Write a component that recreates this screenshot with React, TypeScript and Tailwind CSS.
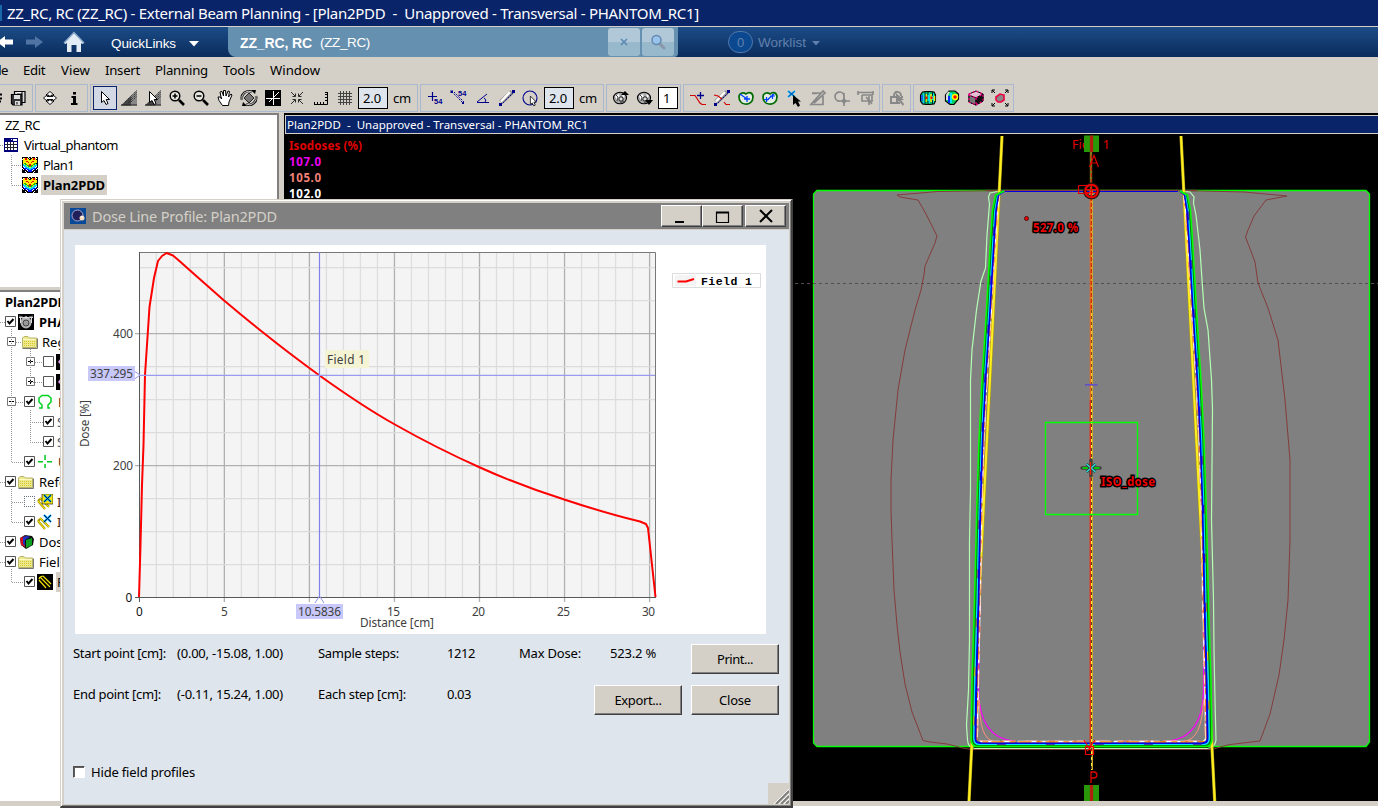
import { useLayoutEffect, useRef, type ReactNode } from "react";

const UI = "font-['Noto_Sans','Open_Sans',sans-serif]";
const ARIAL = "font-['Liberation_Sans',Arial,sans-serif]";

/** Single line of text whose tracking is adjusted so that it spans `w` pixels. */
function Fit({ w, className = "", children }: { w: number; className?: string; children: string }) {
  const ref = useRef<HTMLSpanElement>(null);
  useLayoutEffect(() => {
    const el = ref.current;
    if (!el) return;
    el.style.letterSpacing = "0px";
    const natural = el.getBoundingClientRect().width;
    el.style.letterSpacing = `${(w - natural) / children.length}px`;
  }, [w, children]);
  return (
    <span ref={ref} className={`inline-block shrink-0 whitespace-pre ${className}`}>
      {children}
    </span>
  );
}

/* ---------- toolbar ---------- */

function Icon({ children, active = false }: { children: ReactNode; active?: boolean }) {
  return (
    <span className={`flex h-6 w-6 shrink-0 items-center justify-center ${active ? "border border-[#0a246a] bg-[#d2d8e4]" : ""}`}>
      <svg viewBox="-12 -12 24 24" className="h-6 w-6 shrink-0" fill="none" stroke="#000">
        {children}
      </svg>
    </span>
  );
}

const Pointer = () => (
  <path d="M-3.500 -6.500V4.500L-1 2.500L1 6.500L3 5.500L1.200 1.500H4.500Z" fill="#fff" stroke="#000" />
);

const Dither = () => (
  <>
    <path d="M-8 7.500L8 -8V7.500Z" fill="#888" stroke="none" />
    <path d="M-8 7.500L2 -2V7.500Z" fill="#444" stroke="none" />
    <path d="M2 -2L8 -8M2 0L8 -6M2 2L8 -4M-4 4L2 -2M2 4L8 -2M-1 5L4 0" stroke="#222" strokeDasharray="1 1.200" />
    <path d="M-8 7H8" stroke="#222" />
  </>
);

function Magnifier({ plus }: { plus: boolean }) {
  return (
    <>
      <circle cx="-2" cy="-2" r="4.800" strokeWidth="1.400" fill="#e8e6e0" />
      <path d="M2 2L7 7" strokeWidth="2.600" />
      <path d={plus ? "M-4.500 -2H0.500M-2 -4.500V0.500" : "M-4.500 -2H0.500"} strokeWidth="1.500" />
    </>
  );
}

const Ruler = () => (
  <>
    <path d="M-6 4L5 -6" stroke="#8a8a8a" strokeWidth="5" />
    <path d="M-6 3.500L3 -6" stroke="#fff" strokeWidth="2.500" />
    <path d="M-6 7L7 -6" stroke="#00008b" strokeDasharray="1.500 1" />
    <path d="M-8 5H-5V8H-8ZM5 -8H8V-5H5Z" fill="#00008b" stroke="none" />
  </>
);

const Label54 = ({ x, y }: { x: number; y: number }) => (
  <text x={x} y={y} fontSize="7.500" fontWeight="bold" fill="#00008b" stroke="none" fontFamily="Liberation Sans, sans-serif">54</text>
);

const Hand = () => (
  <path d="M-2.500 7.500L-6 2.500L-7 -1L-4.500 -1L-3.500 1L-5 -6L-3 -6.500L-1.500 -2L-1.500 -7.500L0.500 -7.500L1 -2L3 -7L4.500 -6.500L3.500 -1L6 -4L7 -3L4 4L3.500 7.500Z" fill="#fff" strokeWidth="1" />
);

function Globe({ up }: { up: boolean }) {
  return (
    <>
      <ellipse cx="-1" cy="0" rx="6.500" ry="5.800" fill="#aaa" strokeWidth="1.100" />
      <path d="M-6 -2L-2 -4L-1 0L-4 2ZM1 -4L4 -2L2 0Z" fill="#fff" stroke="none" />
      <path d="M-5 -3L-3 -1L-4 3M-1 5L3 3" stroke="#444" />
      <circle cx="0" cy="1" r="2.200" fill="#ddd" strokeWidth=".9" />
      <path d={up ? "M0 -3L4 -7L8 -3Z" : "M0 2L4 7L8 2Z"} fill="#000" stroke="none" />
    </>
  );
}

function Contour({ two }: { two: boolean }) {
  return (
    <>
      <path d="M0 -4C3 -7 7 -5 7 -1C7 4 3 6.500 -1 6C-5 6 -7 2 -7 -1C-7 -5 -3 -6 0 -4Z" stroke="#006c00" strokeWidth="1.700" fill="#e4ece4" />
      {two ? (
        <path d="M-4 3L4 -4M-6 1.500H-1M-3.500 -1V4M0 -2H5M2.500 -4V1" stroke="#0040ff" strokeWidth="1.200" />
      ) : (
        <path d="M-6 -4L1 1M-2 1H4M1 -2V4" stroke="#0040ff" strokeWidth="1.300" />
      )}
    </>
  );
}

function Group({ children, className }: { children: ReactNode; className: string }) {
  return <div className={`flex h-[28px] shrink-0 items-start border border-[#aab8d0] pl-[2px] pt-px ${className}`}>{children}</div>;
}

function NumberBox({ value, className }: { value: string; className: string }) {
  return (
    <span className={`mt-px flex h-[22px] shrink-0 items-center border border-black pl-1 pt-px text-[13px] leading-none ${className}`}>
      <Fit w={value.length > 1 ? 18 : 7}>{value}</Fit>
    </span>
  );
}

const Cm = () => <Fit w={18} className="ml-[5px] mt-[3px] text-[13px] leading-[19px]">cm</Fit>;

function Toolbar() {
  return (
    <div className="flex h-[29px] items-start gap-[2px] overflow-hidden">
      <div className="flex h-[28px] w-[33px] shrink-0 items-start border-y border-r border-[#aab8d0] pt-px">
        <svg viewBox="0 0 6 24" className="h-6 w-[6px]" stroke="#000" fill="none"><path d="M0 8.500H2M0 12.500H2M0 15.500H1" strokeWidth="2" /></svg>
        <Icon>
          <path d="M-3.500 -4V-6.500H7V4.500H4" fill="#ddd" strokeWidth="1.200" />
          <path d="M-1 -6.500H4V-4H-1" fill="#fff" />
          <path d="M-6.500 -3.500H4V7H-5L-6.500 5.500Z" fill="#333" strokeWidth="1.200" />
          <path d="M-4 -3H2V1H-4ZM-3 3H2V7H-3Z" fill="#ddd" stroke="none" />
          <path d="M-1 4V6.500" />
        </Icon>
      </div>
      <Group className="w-[53px]">
        <Icon>
          <path d="M-1.500 -3V-2H1.500V-3H4L0 -6.500L-4 -3ZM-1.500 3V2H1.500V3H4L0 6.500L-4 3ZM-6.500 0L-3 -3V-1.500H3V-3L6.500 0L3 3V1.500H-3V3Z" fill="#fff" strokeWidth=".9" />
        </Icon>
        <Icon><path d="M-1 -6H2V-3.500H-1ZM-2.500 -2H2V5H3.500V7H-3V5H-1V0H-2.500Z" fill="#000" stroke="none" /></Icon>
      </Group>
      <Group className="w-[328px]">
        <Icon active><Pointer /></Icon>
        <Icon><Dither /></Icon>
        <Icon><Dither /><Pointer /></Icon>
        <Icon><Magnifier plus /></Icon>
        <Icon><Magnifier plus={false} /></Icon>
        <Icon><Hand /></Icon>
        <Icon>
          <path d="M0 -5L5 0L0 5L-5 0Z" fill="#777" strokeWidth=".8" />
          <path d="M-7 2A7 7 0 0 1 3 -6M7 -2A7 7 0 0 1 -3 6" strokeWidth="2.400" />
          <path d="M-7 2A7 7 0 0 1 3 -6M7 -2A7 7 0 0 1 -3 6" stroke="#eee" strokeWidth=".9" />
          <path d="M2 -8L6 -4L7 -8ZM-2 8L-6 4L-7 8Z" fill="#000" stroke="none" />
        </Icon>
        <Icon>
          <path d="M-8 -8H8V8H-8Z" fill="#000" stroke="none" />
          <path d="M-7 .5H7M.5 -7V7M0 0L6 -6M0 0L-4 4" stroke="#fff" />
        </Icon>
        <Icon><path d="M-6 -6L-2 -2M-1.500 -4.500V-1.500H-4.500M6 -6L2 -2M1.500 -4.500V-1.500H4.500M-6 6L-2 2M-1.500 4.500V1.500H-4.500M6 6L2 2M1.500 4.500V1.500H4.500" strokeWidth=".8" /></Icon>
        <Icon><path d="M-7 6.500H6.500V-6M-6.500 6V4M-3.500 6V4M-.5 6V4M2.500 6V4M6 2.500H4M6 -.5H4M6 -3.500H4M6 -5.500H4" /></Icon>
        <Icon><path d="M-4.500 -7V7M-1.500 -7V7M1.500 -7V7M4.500 -7V7M-7 -4.500H7M-7 -1.500H7M-7 1.500H7M-7 4.500H7" stroke="#444" /></Icon>
        <NumberBox value="2.0" className="ml-px w-[30px] bg-[#dee5ec]" />
        <Cm />
      </Group>
      <Group className="w-[184px]">
        <Icon><path d="M-7 -1.500H2M-2.500 -6V3" stroke="#00008b" strokeWidth="1.200" /><Label54 x={-1} y={5.500} /></Icon>
        <Icon><path d="M-7 -6L5 6M-5 -6L5 4" stroke="#00008b" strokeDasharray="1.500 1" /><path d="M-8.500 -7.500H-6V-5H-8.500ZM3 4H5V6H3Z" fill="#00008b" stroke="none" /><Label54 x={-1} y={-2} /></Icon>
        <Icon><path d="M-6 4.500H6M-6 4L4 -4M1 0C3 1 3 3 2 4" stroke="#00008b" /></Icon>
        <Icon><Ruler /></Icon>
        <Icon><circle cx="-1" r="7" stroke="#00008b" strokeWidth="1.100" /><g transform="translate(2 3) scale(.75)"><Pointer /></g></Icon>
        <NumberBox value="2.0" className="ml-px w-[30px] bg-[#dee5ec]" />
        <Cm />
      </Group>
      <Group className="w-[75px]">
        <Icon><Globe up /></Icon>
        <Icon><Globe up={false} /></Icon>
        <NumberBox value="1" className="ml-px w-[20px] bg-white" />
      </Group>
      <Group className="w-[197px]">
        <Icon><path d="M-8 -2.500H-3L0 2L2 5L4 6.500H8" stroke="#d00000" strokeWidth="1.200" /><path d="M-1 -2.500H6M2.500 -6V1" stroke="#00008b" strokeWidth="1.300" /></Icon>
        <Icon><Ruler /><path d="M-8 -3L-4 -2L0 1M2 4L4 6.500H8" stroke="#d00000" strokeWidth="1.200" /></Icon>
        <Icon><Contour two={false} /></Icon>
        <Icon><Contour two /></Icon>
        <Icon>
          <path d="M-6 -7L1 -1M1 -7L-6 -1" stroke="#00b0ff" strokeWidth="1.700" />
          <path d="M-5.500 -6.500L.5 -1.500M.5 -6.500L-5.500 -1.500" stroke="#002080" strokeWidth=".7" />
          <path d="M-1 -3V7L1.500 5L4 9L6 7.500L4 3.500H7Z" fill="#000" stroke="none" />
        </Icon>
        <Icon><path d="M-6 -5H3M-6 -4.500H-1M5 -2V6.500H-7L5 -7L7 -5L-4 5" stroke="#888" strokeWidth="1.700" /></Icon>
        <Icon><path d="M2 -2A4.500 4.500 0 1 0 -2 3M2 -5V8M-3 3H8" stroke="#888" strokeWidth="1.700" /><path d="M2 0L5 3L2 6L-1 3Z" fill="#888" stroke="none" /></Icon>
        <Icon><path d="M-8 -5.500H7M-8 -7V-3M7 -7V-3M-4 -3H6V3M-4 -3V3H0M0 -1L6 6M3 -2V7M0 3H7" stroke="#888" strokeWidth="1.600" /></Icon>
      </Group>
      <Group className="w-[29px]">
        <Icon><path d="M-7 -1H1M-6 -1V5H3M-3 -2C-3 -8 4 -7 4 -2M4 -1H6" stroke="#888" strokeWidth="2" /><path d="M-1 -5V5L2 3L6 8L7 6L4 2H7Z" fill="#888" stroke="none" /></Icon>
      </Group>
      <Group className="w-[101px]">
        <Icon>
          <path d="M-5.500 -6L-2 -6.500L2 -6.500L6 -6L7.500 -3V3L6 6L2 6.500L-2 6.500L-5.500 6L-7.500 3V-3Z" fill="#00c070" strokeWidth="1.100" />
          <path d="M-6 -3V3M-5 4V5" stroke="#2040ff" strokeWidth="1.500" />
          <path d="M-4 -5V5M1 -5V5M5 -5V5" stroke="#00f0ff" strokeWidth="1.500" />
          <path d="M-2 -4V4M3 -4V4M6.500 -2V3" stroke="#ffee00" strokeWidth="1.500" />
          <path d="M-1.500 -1.500V1M3.500 -1.500V1" stroke="#f00" strokeWidth="2" />
          <path d="M-3 -6V6M0 -6.500V-3M0 3V6M4.500 -6V-2M4.500 2V6" strokeWidth=".8" />
        </Icon>
        <Icon>
          <path d="M-3 -7H3L6.500 -4V1L2 6.500H-2L-6.500 3V-3Z" fill="#00d060" strokeWidth="1.200" />
          <path d="M-3 -6L-5 -3V2" stroke="#ddd" strokeWidth="2" /><path d="M-3 -2V5" stroke="#0028ff" strokeWidth="2" /><path d="M-1 -5V5" stroke="#00e5ff" strokeWidth="2" />
          <circle cx="3" cy="-1" r="2.500" fill="#f00" stroke="#ff0" strokeWidth="1.500" />
        </Icon>
        <Icon>
          <path d="M-7 -4L0 -7L7 -4V3L0 7L-7 4Z" fill="#e0c0d0" stroke="#000" />
          <path d="M-7 -3L0 0V7L-7 4Z" fill="#777" /><path d="M0 0L7 -4V3L0 7Z" fill="#111" />
          <path d="M-7 -4L0 -7L7 -4V3L0 7L-7 4ZM-7 -3L0 0L7 -4M0 0V7" stroke="#ff0090" strokeDasharray="2 2" strokeWidth="1.200" />
        </Icon>
        <Icon>
          <path d="M-8 -5V-8H-5M8 -5V-8H5M-8 5V8H-5M8 5V8H5M-8 -8L-5 -5M8 -8L5 -5M-8 8L-5 5M8 8L5 5" strokeWidth="1" />
          <path d="M-4 -1L0 -4L4 -3V2L1 4H-2L-4 2Z" fill="#888" stroke="#f00040" strokeWidth="1.600" />
        </Icon>
      </Group>
    </div>
  );
}

/* ---------- trees ---------- */

function PlanIcon() {
  return (
    <svg viewBox="0 0 16 16" className="h-4 w-4 shrink-0" shapeRendering="crispEdges">
      <path d="M0 0H16V16H0Z" />
      <path d="M2 1H5L8 3L11 1H14L15 4L14 9L8 14L2 9L1 4Z" fill="#ffee00" />
      <path d="M1 7L8 11L15 7V10L8 15L1 10Z" fill="#00d8ff" />
      <path d="M1 9.500L8 13L15 9.500V11L8 15.500L1 11Z" fill="#0018ff" />
      <path d="M2 6L8 10L14 6" stroke="#18b818" fill="none" />
      <path d="M3 1H5V3H3ZM11 1H13V3H11ZM7 7H9V9H7ZM4 4H6V5H4ZM10 4H12V5H10ZM6 5H7V6H6ZM9 5H10V6H9Z" fill="#f00000" />
      <path d="M0 3L3 0M13 0L16 3M0 11L5 16M16 11L11 16M6 0L8 2L10 0M1 9L7 15M15 9L9 15" stroke="#fff" strokeDasharray="1 1" fill="none" />
    </svg>
  );
}

function Check({ state = "on" }: { state?: "on" | "off" | "dotted" }) {
  if (state === "dotted") return <span className="-mt-px h-[11px] w-[11px] shrink-0 border border-dotted border-gray-500 bg-white" />;
  return (
    <svg viewBox="0 0 11 11" className="-mt-px h-[11px] w-[11px] shrink-0">
      <path d="M.5 .5H10.500V10.500H.5Z" fill="#fff" stroke="#555" />
      {state === "on" && <path d="M2.500 5L4.500 7.500L8.500 3" fill="none" stroke="#000" strokeWidth="2" />}
    </svg>
  );
}

const Expander = ({ plus = false }: { plus?: boolean }) => (
  <svg viewBox="0 0 9 9" className="-mt-px h-[9px] w-[9px] shrink-0">
    <path d="M.5 .5H8.500V8.500H.5Z" fill="#fff" stroke="#777" />
    <path d={plus ? "M2 4.500H7M4.500 2V7" : "M2 4.500H7"} stroke="#000" />
  </svg>
);

const Folder = () => (
  <svg viewBox="0 0 16 14" className="h-[14px] w-4 shrink-0">
    <path d="M.5 12.500V3L2 1.500H6L7.500 3H14.500V12.500Z" fill="#ece890" stroke="#b8b468" />
    <path d="M1 4.500H14" stroke="#fffbc0" />
    <path d="M2 6.500H14M2 8.500H14M2 10.500H14" stroke="#d8c828" strokeDasharray="1 1" />
    <path d="M.5 13.500H15.500V3.500" stroke="#777" fill="none" />
  </svg>
);

const FieldLines = ({ dark = false, mark = false, box = false }: { dark?: boolean; mark?: boolean; box?: boolean }) => (
  <svg viewBox="0 0 16 16" className="h-4 w-4 shrink-0" fill="none">
    {dark && <path d="M0 0H16V16H0Z" fill="#000" />}
    {dark ? (
      <path d="M3 3L13 13M6 2L14 10M2 6L9 14M3 3L6 2M2 5L3 3" stroke="#f0e000" strokeWidth="1.200" />
    ) : (
      <>
        <path d="M1 7L8 15M3 4L12 13M1 7L3 5" stroke="#a89800" strokeWidth="2.200" />
        <path d="M1 7L8 15M3 4L12 13" stroke="#ffe800" strokeWidth="1" />
      </>
    )}
    {box && <path d="M5 0H16V10H5Z" fill="#ffe800" stroke="#222" strokeWidth=".7" />}
    {mark && <path d="M7 1L14 8M14 1L7 8" stroke="#00a0e8" strokeWidth="2.200" />}
    {mark && <path d="M7 1L14 8M14 1L7 8" stroke="#001050" strokeWidth=".9" />}
  </svg>
);

function Row({ className = "", children }: { className?: string; children: ReactNode }) {
  return <div className={`flex h-5 shrink-0 items-center whitespace-nowrap text-[13px] leading-5 ${className}`}>{children}</div>;
}

function Trees() {
  return (
    <div className="flex w-[279px] shrink-0 flex-col">
      <div className="relative h-[174px] border-r-2 border-t-2 border-[#808080] bg-white">
        <svg className="absolute left-0 top-0 h-20 w-10" stroke="#999" fill="none" strokeDasharray="1 1">
          <path d="M0 30.500H4M11.500 40V70.500M12 50.500H22M12 70.500H22" />
        </svg>
        <Row className="pl-[5px]"><Fit w={35}>ZZ_RC</Fit></Row>
        <Row className="gap-[6px] pl-1">
          <svg viewBox="0 0 14 14" className="h-[14px] w-[14px] shrink-0" shapeRendering="crispEdges">
            <path d="M0 0H14V14H0Z" fill="#00007c" /><path d="M1 4H13V12H1Z" fill="#fff" />
            <path d="M1 6.500H13M1 9.500H13M3.500 4V12M6.500 4V12M9.500 4V12" stroke="#223" />
            <path d="M7 1H8V2H7ZM9 1H13V3H9Z" fill="#fff" />
          </svg>
          <Fit w={94}>Virtual_phantom</Fit>
        </Row>
        <Row className="gap-[5px] pl-[22px]"><PlanIcon /><Fit w={31}>Plan1</Fit></Row>
        <Row className="gap-[3px] pl-[22px]">
          <PlanIcon />
          <span className="h-5 w-[66px] bg-[#d4d0c8] pl-[2px] font-bold"><Fit w={62}>Plan2PDD</Fit></span>
        </Row>
      </div>
      <div className="h-[3px]" />
      <div className="relative h-[511px] overflow-hidden border-r-2 border-t-2 border-[#808080] bg-white">
        <svg className="absolute left-0 top-0 h-[310px] w-[60px]" stroke="#999" fill="none" strokeDasharray="1 1">
          <path d="M0 30.500H5M0 190.500H5M0 250.500H5M0 270.500H5M11.500 37V170.500H24M16 50.500H22M30.500 57V90.500H43M35 70.500H43M16 110.500H24M30.500 118V150.500H43M30 130.500H43M11.500 197V230.500H24M12 210.500H24M11.500 277V290.500H24" />
        </svg>
        <Row className="pl-[5px] font-bold"><Fit w={62}>Plan2PDD</Fit></Row>
        <Row className="pl-[5px] font-bold">
          <Check />
          <svg viewBox="0 0 16 16" className="ml-[2px] mr-[5px] h-4 w-4">
            <path d="M0 0H16V16H0Z" /><ellipse cx="8" cy="8.500" rx="5.500" ry="6" fill="#b0b0b0" /><circle cx="8" cy="9" r="3" fill="#999" stroke="#444" /><path d="M1 3.500H15M8 2V5M2.500 9V4M13.500 9V4" stroke="#ddd" /><path d="M1 2L5 3M15 2L11 3" stroke="#888" />
          </svg>
          PHANTOM
        </Row>
        <Row className="pl-[7px]"><Expander /><span className="w-[6px]" /><Folder /><span className="w-[4px]" />Registered</Row>
        {[0, 1].map((n) => (
          <Row key={n} className="pl-[26px]">
            <Expander plus /><span className="w-2" /><Check state="off" />
            <svg viewBox="0 0 16 16" className="ml-[2px] h-4 w-4"><path d="M0 0H16V16H0Z" /><path d="M2 8L5 4V11Z" fill="#e0a0f0" /></svg>
          </Row>
        ))}
        <Row className="pl-[7px]">
          <Expander /><span className="w-2" /><Check />
          <svg viewBox="0 0 16 16" className="ml-[2px] mr-[5px] h-4 w-4" fill="none" stroke="#00d020" strokeWidth="1.500"><path d="M2 14H5V11L2 8V4L5 1.500H11L14 4V8L11 11V14H13" /></svg>
          <span className="text-[#502010]">BODY</span>
        </Row>
        <Row className="pl-[43px]"><Check /><span className="ml-[3px] text-gray-600">S</span></Row>
        <Row className="pl-[43px]"><Check /><span className="ml-[3px] text-gray-600">S</span></Row>
        <Row className="pl-[24px]">
          <Check />
          <svg viewBox="0 0 16 16" className="ml-[3px] mr-[4px] h-4 w-4"><path d="M0 7H5V8.500H0ZM9 7H14V8.500H9ZM6.300 1H7.800V6H6.300ZM6.300 10H7.800V14H6.300Z" fill="#00c820" /></svg>
          <span className="text-[#502010]">User</span>
        </Row>
        <Row className="pl-[5px]"><Check /><span className="w-[2px]" /><Folder /><span className="w-[5px]" />Reference</Row>
        <Row className="pl-[24px]"><Check state="dotted" /><span className="w-[2px]" /><FieldLines mark box /><span className="w-[4px]" /><span className="text-[#502010]">ISO</span></Row>
        <Row className="pl-[24px]"><Check /><span className="w-[2px]" /><FieldLines mark /><span className="w-[4px]" /><span className="text-[#502010]">ISO</span></Row>
        <Row className="pl-[5px]">
          <Check />
          <svg viewBox="0 0 16 16" className="ml-[3px] mr-[4px] h-4 w-4"><path d="M1 4L6 1L13 2L15 5L14 11L7 15L2 11Z" fill="#111" /><path d="M1 4L6 2V13L2 11Z" fill="#d01020" /><path d="M4 3L8 2L11 3L6 6V12L4 10Z" fill="#2030c0" /><path d="M7 6L13 4V11L7 14Z" fill="#10a020" /></svg>
          Dose
        </Row>
        <Row className="pl-[5px]"><Check /><span className="w-[2px]" /><Folder /><span className="w-[5px]" />Fields</Row>
        <Row className="pl-[24px]"><Check /><span className="w-[2px]" /><FieldLines dark /><span className="ml-[3px] h-5 w-8 bg-[#d4d0c8] pl-px">Field</span></Row>
      </div>
    </div>
  );
}

/* ---------- transversal view ---------- */

const DEPTH: [number, number][] = [[195, 995.5], [210, 992.5], [240, 990.5], [283, 988], [310, 986.5], [380, 982], [440, 979], [500, 977], [540, 976], [600, 974.5], [680, 972], [738, 971]];

const LAYERS = [
  { color: "#ff8a80", d: 6.8, b: 741, w: 1, dash: "14 9" },
  { color: "#ffffff", d: 6.2, b: 741.5, w: 1.5, dash: "19 3 9 6" },
  { color: "#ff7f00", d: 5.5, b: 742, w: 1.5, dash: "13 5 6 3" },
  { color: "#0000e8", d: 4.3, b: 743.5, w: 2.2, dash: undefined },
  { color: "#00e5ff", d: 2.6, b: 744.7, w: 1.5, dash: "40 9" },
  { color: "#00820a", d: 1.3, b: 745.7, w: 1.5, dash: undefined },
  { color: "#00ff00", d: 0, b: 746.5, w: 1.5, dash: undefined },
];

/** The layers lie closer together near the surface than at depth. */
const spread = (y: number) => (y < 210 ? 0.6 : y < 520 ? 0.78 : Math.min(1, 0.78 + ((y - 520) / 140) * 0.22));

function isodose(d: number, bottom: number) {
  const left = DEPTH.map(([y, x]) => `${x + d * spread(y)} ${y}`);
  const right = [...DEPTH].reverse().map(([y, x]) => `${2183 - x - d * spread(y)} ${y}`);
  return `M1004 191L${left.join("L")}Q${971 + d} ${bottom} ${977 + d} ${bottom}H${1206 - d}Q${1212 - d} ${bottom} ${right.join("L")}L1180 191`;
}

const OUTLINED = "fill-[#f00000] stroke-black font-['Noto_Sans','Open_Sans',sans-serif] font-bold [paint-order:stroke]";

function Scan() {
  return (
    <svg viewBox="285 134 1093 667" className="block h-[667px] w-[1093px] shrink-0 bg-black" fill="none">
      <g className="font-['Noto_Sans','Open_Sans',sans-serif] font-bold" fontSize="11.500">
        <text x="289" y="150" textLength="73" fill="#e00000">Isodoses (%)</text>
        <text x="289" y="166" textLength="32" fill="#f000f0">107.0</text>
        <text x="289" y="182" textLength="32" fill="#f08078">105.0</text>
        <text x="289" y="198" textLength="32" fill="#fff">102.0</text>
      </g>
      <path d="M817 190.500H1366L1369.500 194V742L1366 746.500H817L813.500 743V194Z" fill="#808080" stroke="#00ff00" strokeWidth="1.300" />
      <path d="M795 283.500H1378" stroke="#505050" strokeDasharray="3 3" />
      <path d="M986 190.500H1197" stroke="#84403c" strokeWidth="1.500" />
      <path d="M1005 191.500H1178" stroke="#0000e0" />
      <path d="M1003 190.500L938 191.500L897 195L900 197L918 200L926 214L937 236L935 243L925 266L924 275L921 290L915 310L905 350L898 390L893 440L891 480L891 510L892 540L894 590L897 625L900 652L905 684L912 712L923 740.500L930 742L947 744L965 748.500L972 749.500H1212L1220 747L1230 744.500L1260 741L1270 714L1279 675L1284 640L1288 600L1290 540V460L1285 400L1278 340L1268 308L1258 283L1255 262L1245.500 237L1248 230L1254 216L1266 200L1287 196L1244 192L1180 190.500" stroke="#843c3c" />
      <path d="M1000 191L990 193L988.500 197L989.500 204L987 235L985.500 268L981 281L976.500 310L972 350L970.500 380V490L969.500 540V640L968.500 690L966.500 725L967.500 740Q968 748 975 748.500H1207Q1215 748 1216 740L1215 700L1214 650L1213.500 600L1212 540L1211.500 520L1212.500 410L1211.500 380L1208 330L1204 308L1202 280L1200 250L1196 215L1193.500 203L1194 197L1190 192L1180 191" stroke="#b4ffb4" strokeWidth="1.200" />
      <path d="M979.500 610L978.500 690Q979 738 1014 741M1168 741Q1203 738 1203.500 690L1204 610" stroke="#ff00ff" strokeWidth="1.200" />
      <path d="M979.500 700Q979 739 994 741.500M1184 741Q1202 740 1203.500 700" stroke="#ff9080" />
      <path d="M1002 136L969 801M1181 136L1214.700 801" stroke="#a89818" strokeWidth="3.200" />
      <path d="M1002 136L969 801M1181 136L1214.700 801" stroke="#ffee20" strokeWidth="2.100" />
      {LAYERS.map((l) => (
        <path key={l.color} d={isodose(l.d, l.b)} stroke={l.color} strokeWidth={l.w} strokeDasharray={l.dash} />
      ))}
      <path d="M1091 152V191" stroke="#807818" strokeWidth="2.400" />
      <path d="M1092 191V770" stroke="#d0a828" strokeWidth="2" />
      <path d="M1091.500 310V770" stroke="#fff040" />
      <path d="M1091.500 310V770" stroke="#504818" strokeDasharray="3 3" />
      <path d="M1090.500 191V400" stroke="#e86820" strokeWidth="1.600" />
      <path d="M1090.300 400V748" stroke="#f02c10" strokeWidth="1.400" />
      <path d="M1091.300 155V310" stroke="#d01010" strokeDasharray="4 2" />
      <path d="M1045.500 422.500H1137.500V514.500H1045.500Z" stroke="#00ff00" strokeWidth="1.300" />
      <path d="M1085 384.800H1097.500" stroke="#6050c8" strokeWidth="1.700" />
      <text x="1072" y="149" fontSize="12.500" textLength="38" className="fill-[#e00000] font-['Noto_Sans']">Field 1</text>
      <path d="M1084 135.500H1099V152H1084ZM1084 785H1099V801H1084Z" fill="#289808" />
      <path d="M1091.500 135.500V152M1091.500 785V801" stroke="#b02010" strokeWidth="3.200" />
      <path d="M1089.500 167L1094 155.500L1098.500 167M1091 163H1097" stroke="#e00000" strokeWidth="1.200" />
      <path d="M1091 783V772H1094.500Q1097 772.500 1097 775Q1097 777.500 1094 778H1091" stroke="#e00000" strokeWidth="1.300" />
      <circle cx="1091.500" cy="191" r="6.500" stroke="#201010" strokeWidth="4" />
      <path d="M1078.500 185.500H1089M1078.500 185.500V193.500H1089" stroke="#e00000" strokeWidth="1.200" />
      <circle cx="1091.500" cy="191" r="6.300" stroke="#f00000" strokeWidth="2" />
      <path d="M1086 189.500H1097M1086 192.500H1097M1091.500 185V197" stroke="#f00000" strokeWidth="1.200" />
      <path d="M1085.500 746.500H1093.500V754.500H1085.500ZM1084 740L1089 748L1095 740M1087 746L1092 751M1092 746L1087 751" stroke="#f00000" strokeWidth="1.200" />
      <path d="M1082 468H1100M1091 460V476" stroke="#404040" strokeWidth="3.500" strokeLinecap="round" />
      <path d="M1086.500 464L1095.500 472M1095.500 464L1086.500 472" stroke="#204040" strokeWidth="3" />
      <path d="M1082.500 468H1088M1094 468H1099.500" stroke="#00c800" strokeWidth="1.800" />
      <path d="M1086.500 464L1095.500 472M1095.500 464L1086.500 472" stroke="#30e0e0" strokeWidth="1.300" />
      <path d="M1090.500 462V475" stroke="#f02000" strokeWidth="1.300" />
      <circle cx="1026.500" cy="218.500" r="2" fill="#f00000" stroke="#501010" />
      <text x="1033" y="232" fontSize="11.500" textLength="45" strokeWidth="2.800" className={OUTLINED}>527.0 %</text>
      <text x="1101" y="485.500" fontSize="11.500" textLength="54" strokeWidth="2.800" className={OUTLINED}>ISO_dose</text>
    </svg>
  );
}

/* ---------- dose profile window ---------- */

const X = (cm: number) => 64.3 + cm * 17.01;
const Y = (pct: number) => 352.5 - pct * 0.66;

function Chart() {
  const cms = Array.from({ length: 30 }, (_, i) => i + 1);
  const levels = [50, 100, 150, 200, 250, 300, 350, 400, 450, 500];
  return (
    <svg viewBox="0 0 691 389" className="block h-[389px] w-[691px] bg-white font-['Noto_Sans','Open_Sans',sans-serif]" fill="none" fontSize="11.800">
      <path d="M64 7H581V352.500H64Z" fill="#f4f4f4" />
      {cms.map((c) => (
        <path key={c} d={`M${X(c)} 7V${c % 5 ? 352 : 357}`} stroke={c % 5 ? "#dedede" : "#b0b0b0"} strokeWidth="1.300" />
      ))}
      {levels.map((l) => (
        <path key={l} d={`M${l % 200 ? 64 : 60} ${Y(l) + 0.2}H580.500`} stroke={l % 200 ? "#dcdcdc" : "#b0b0b0"} strokeWidth="1.300" />
      ))}
      <path d="M64.500 7.500H580.500V352.500" stroke="#787878" />
      <path d="M64.500 7V357M60 352.500H581" stroke="#585858" />
      <path d="M64 352L65.500 300L67 240L68.500 200L70 130L74.500 62L79 33L83 16L87 11L91.500 8L98 10.500L105 16.500C120 30 135 43 149 55.500C163 67 176 78 190 89C208 103.500 226 117 244.500 130.500C269 148 294 165 319 179C349 196 377 210 405 222.500C435 236 462 246 490 254.700C515 263 540 270.500 565 276.500L571 279L573 283L580.500 352" stroke="#ff0000" strokeWidth="2" strokeLinejoin="round" />
      <path d="M244.500 7V352" stroke="#8080ea" strokeWidth="1.200" />
      <path d="M64 130.300H580" stroke="#9a9aee" strokeWidth="1.200" />
      <path d="M240 358L244.500 351L249 358M59 126L65 130L59 134.500" stroke="#9090f0" />
      <path d="M13 121H60V136H13ZM221 359H268V374H221Z" fill="#c8c8fa" />
      <path d="M250 105H294V123H250Z" fill="#f4f4d4" />
      <g fill="#404040">
        <text x="252" y="118.500" textLength="38">Field 1</text>
        <text x="38" y="93" textLength="20">400</text>
        <text x="38" y="225" textLength="20">200</text>
        <text x="50.500" y="357" fill="#111">0</text>
        <text x="15" y="133" textLength="43">337.295</text>
        <text x="61" y="371" fill="#111">0</text>
        <text x="146" y="371">5</text>
        <text x="223" y="371" textLength="43">10.5836</text>
        <text x="312" y="371" textLength="13">15</text>
        <text x="397" y="371" textLength="13">20</text>
        <text x="482" y="371" textLength="13">25</text>
        <text x="567" y="371" textLength="13">30</text>
        <text x="285" y="382" textLength="74">Distance [cm]</text>
        <text transform="translate(13.500 202) rotate(-90)" textLength="47">Dose [%]</text>
      </g>
      <path d="M597.500 28.500H685.500V42.500H597.500Z" fill="#fff" stroke="#dcdcdc" />
      <path d="M600 30H621V41H600Z" fill="#f4f4f4" />
      <path d="M602.500 36.500H611L619 34" stroke="#f00" strokeWidth="1.900" />
      <text x="626" y="40" textLength="51" fontSize="11.500" className="fill-black font-['Liberation_Mono'] font-bold">Field 1</text>
    </svg>
  );
}

const RAISED = "border border-b-[#404040] border-l-white border-r-[#404040] border-t-white bg-[#d4d0c8] shadow-[inset_-1px_-1px_0_#808080]";

function Button({ children, w, className = "" }: { children: string; w: number; className?: string }) {
  return (
    <button className={`flex h-[30px] w-[88px] shrink-0 items-center justify-center text-[13px] leading-none ${RAISED} ${className}`}>
      <Fit w={w}>{children}</Fit>
    </button>
  );
}

function DoseWindow() {
  return (
    <div className="absolute left-[60px] top-[199px] flex h-[609px] w-[733px] flex-col border border-b-2 border-r-2 border-[#d4d0c8] border-b-[#404040] border-r-[#404040] bg-[#d4d0c8] shadow-[inset_1px_1px_0_#fff,inset_-1px_-1px_0_#808080] pb-[2px] pl-[3px] pr-[2px] pt-[3px]">
      <div className="flex h-[26px] shrink-0 items-center bg-[#808080] pl-[6px] pr-[3px] text-[14.5px] text-[#d4d0c8]">
        <svg viewBox="0 0 16 16" className="mr-[6px] h-4 w-4"><path d="M0 0H16V16H0Z" fill="#084898" /><circle cx="7.500" cy="7.500" r="5.500" fill="#20205c" stroke="#b0a8c8" strokeWidth="1" /><circle cx="12" cy="10" r="2.500" fill="#f8d8b8" /><circle cx="12" cy="9" r="1" fill="#fff" /></svg>
        <Fit w={185} className="mr-auto mt-px">Dose Line Profile: Plan2PDD</Fit>
        {["M13 16H22", "M13.500 6H25.500V16.500H13.500ZM13.500 7H25.500", "M14 4L26 16M26 4L14 16"].map((d, i) => (
          <span key={d} className={`h-[22px] w-[41px] ${RAISED} ${i === 2 ? "ml-[2px]" : ""}`}>
            <svg viewBox="0 0 39 20" className="h-[20px] w-[39px]" fill="none" stroke="#000" strokeWidth={i === 1 ? 1.2 : 2}><path d={d} /></svg>
          </span>
        ))}
      </div>
      <div className="relative mt-px flex grow flex-col bg-[#dee5ec] pl-[9px] pt-[15px] text-[13px]">
        <div className="ml-[2px] h-[389px] w-[691px]"><Chart /></div>
        <div className="mt-[10px] grid h-[41px] grid-cols-[104px_141px_129px_72px_91px_81px_88px] items-start leading-[19px]">
          <Fit w={93} className="justify-self-start">Start point [cm]:</Fit>
          <Fit w={106} className="justify-self-start">(0.00, -15.08, 1.00)</Fit>
          <Fit w={81} className="justify-self-start">Sample steps:</Fit>
          <Fit w={28} className="justify-self-start">1212</Fit>
          <Fit w={62} className="justify-self-start">Max Dose:</Fit>
          <Fit w={46} className="justify-self-start">523.2 %</Fit>
          <Button w={36}>Print...</Button>
        </div>
        <div className="grid h-[41px] grid-cols-[104px_141px_129px_75px_72px_97px_88px] items-start leading-[19px]">
          <Fit w={88} className="justify-self-start">End point [cm]:</Fit>
          <Fit w={106} className="justify-self-start">(-0.11, 15.24, 1.00)</Fit>
          <Fit w={88} className="justify-self-start">Each step [cm]:</Fit>
          <Fit w={24} className="justify-self-start">0.03</Fit>
          <span />
          <Button w={47}>Export...</Button>
          <Button w={32}>Close</Button>
        </div>
        <div className="mt-[36px] flex h-5 items-center gap-[6px]">
          <span className="h-3 w-3 border border-white border-l-[#505050] border-t-[#505050] bg-white shadow-[inset_1px_1px_0_#606060]" />
          <Fit w={104} className="leading-5">Hide field profiles</Fit>
        </div>
        <svg viewBox="0 0 21 21" className="absolute bottom-0 right-0 h-[21px] w-[21px] bg-[#d4d0c8]" fill="none">
          <path d="M6 21L21 6M11 21L21 11M16 21L21 16" stroke="#fff" />
          <path d="M8 21L21 8M13 21L21 13M18 21L21 18" stroke="#808080" strokeWidth="2" />
        </svg>
      </div>
    </div>
  );
}

/* ---------- page ---------- */

const MENU: [string, number, string][] = [
  ["File", 19, "-ml-[11px]"], ["Edit", 22, "ml-[15px]"], ["View", 29, "ml-[16px]"], ["Insert", 35, "ml-[15px]"],
  ["Planning", 53, "ml-[15px]"], ["Tools", 32, "ml-[15px]"], ["Window", 50, "ml-[15px]"],
];

export default function App() {
  return (
    <div className={`relative flex h-[808px] w-[1378px] flex-col overflow-hidden bg-[#d4d0c8] text-black ${UI}`}>
      <header className="flex h-[27px] shrink-0 items-center border-b border-[#d4d0c8] bg-[#0a246a] text-[15px] leading-none text-white">
        <span className="mr-[5px] h-4 w-[2px] bg-[#1868a8]" />
        <Fit w={692} className="pt-px">{"ZZ_RC, RC (ZZ_RC) - External Beam Planning - [Plan2PDD  -  Unapproved - Transversal - PHANTOM_RC1]"}</Fit>
      </header>

      <nav className={`flex h-[30px] shrink-0 bg-linear-to-b from-[#1c4c88] to-[#0a2c5c] text-white ${ARIAL}`}>
        <div className="flex w-[228px] shrink-0 items-center">
          <svg viewBox="0 0 90 30" className="h-[30px] w-[90px] shrink-0">
            <path d="M0 12.500H13V17.500H5V21L-3 15L5 9V12.500Z" fill="#fff" />
            <path d="M26 12.500H35V9L43 15L35 21V17.500H26Z" fill="#4f74a4" />
            <path d="M64 16L74 5.500L84 16L82 17L81 16V25H76.500V18H71.500V25H67V16L65.500 17Z" fill="#e4ecf6" />
            <path d="M64 16L74 5.500L84 16" stroke="#8ba8c8" strokeWidth="1.500" fill="none" />
          </svg>
          <Fit w={65} className="ml-[21px] mt-[4px] text-[13.5px]">QuickLinks</Fit>
          <svg viewBox="0 0 10 6" className="ml-[13px] mt-[4px] h-[6px] w-[10px]"><path d="M0 0H10L5 5.500Z" fill="#fff" /></svg>
        </div>
        <div className="flex w-[450px] shrink-0 items-center rounded-bl-lg rounded-br-sm bg-[#6690b0] pl-3">
          <Fit w={72} className="mt-[2px] text-[14px] font-bold">ZZ_RC, RC</Fit>
          <Fit w={50} className="ml-[8px] mt-[2px] text-[13.5px]">(ZZ_RC)</Fit>
          <div className="ml-auto mr-[4px] flex gap-[2px]">
            <span className="flex h-[28px] w-8 items-center justify-center rounded-[3px] bg-linear-to-b from-[#b0c8d8] from-50% to-[#98b8cc] to-50%">
              <svg viewBox="0 0 8 8" className="h-2 w-2"><path d="M1 1L7 7M7 1L1 7" stroke="#5888b0" strokeWidth="1.500" /></svg>
            </span>
            <span className="flex h-[28px] w-8 items-center justify-center rounded-[3px] bg-linear-to-b from-[#b0c8d8] from-50% to-[#98b8cc] to-50%">
              <svg viewBox="0 0 16 16" className="h-4 w-4"><path d="M9 9L14 14" stroke="#8898a8" strokeWidth="3" strokeLinecap="round" /><circle cx="6.500" cy="6" r="4.500" fill="#98c4ec" stroke="#6488b0" strokeWidth="1.500" /></svg>
            </span>
          </div>
        </div>
        <div className="flex grow items-center pl-[50px] text-[#6080ac]">
          <span className="flex h-[22px] w-[25px] items-center justify-center rounded-full border border-[#4f78ac] bg-[#0c4890] pt-px text-[13px]">0</span>
          <Fit w={48} className="ml-[5px] mt-[2px] text-[13.5px]">Worklist</Fit>
          <svg viewBox="0 0 8 5" className="ml-[6px] mt-[3px] h-[5px] w-2"><path d="M0 0H8L4 4.500Z" fill="#6080ac" /></svg>
        </div>
      </nav>

      <div className="flex h-[27px] shrink-0 items-center pt-px text-[13.2px]">
        {MENU.map(([label, w, space]) => (
          <Fit key={label} w={w} className={space}>{label}</Fit>
        ))}
      </div>

      <Toolbar />

      <main className="flex h-[688px] shrink-0">
        <Trees />
        <section className="ml-[5px] flex w-[1094px] flex-col border-l border-t-2 border-black">
          <div className="flex h-[19px] shrink-0 items-center border-b border-l border-t border-[#d4d0c8] bg-[#0a246a] pl-px text-[11.5px] leading-none text-white">
            <Fit w={301}>{"Plan2PDD  -  Unapproved - Transversal - PHANTOM_RC1"}</Fit>
          </div>
          <Scan />
        </section>
      </main>
      <footer className="h-[7px] bg-[#d4d0c8] pt-[5px]"><div className="h-[2px] bg-white" /></footer>

      <DoseWindow />
    </div>
  );
}
